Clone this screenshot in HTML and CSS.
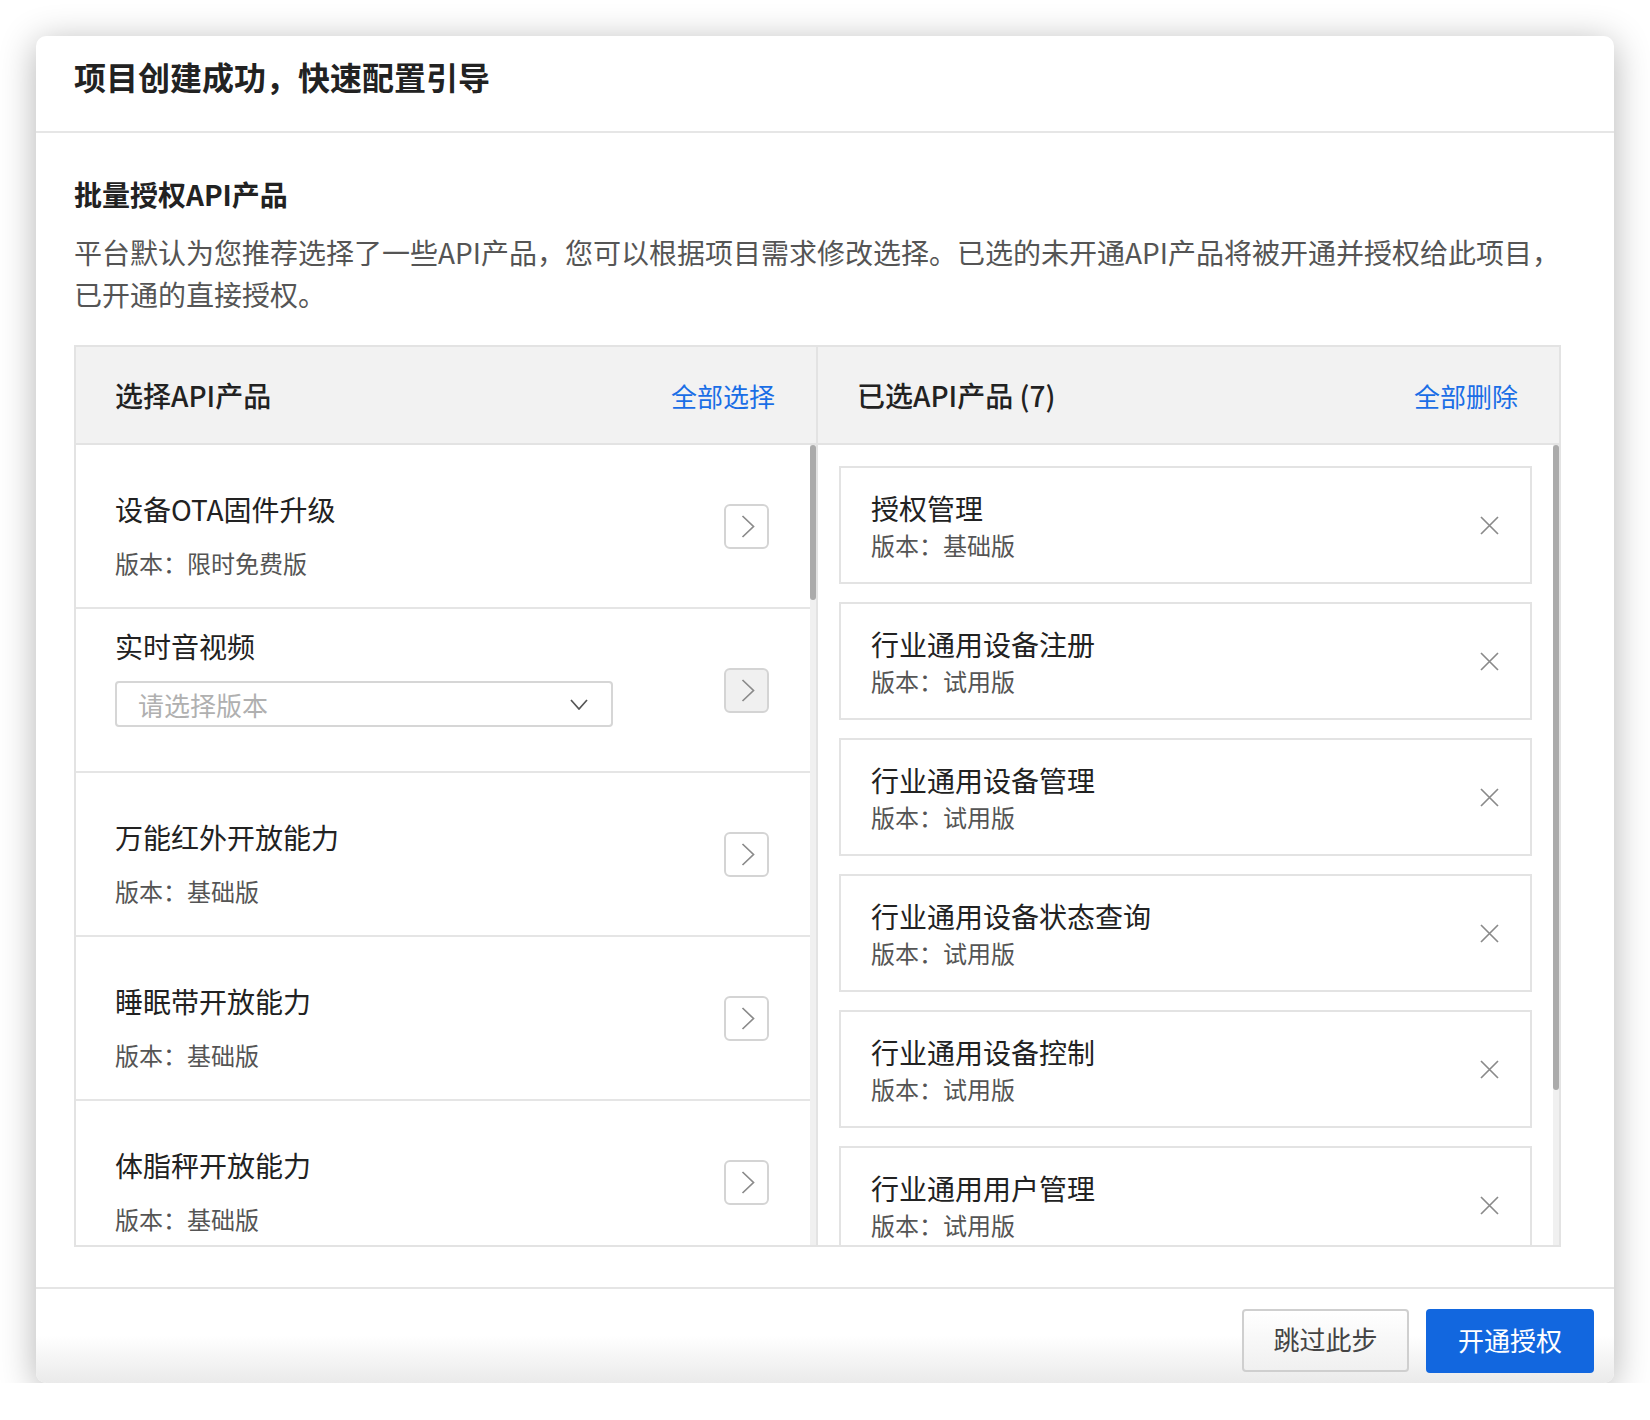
FILE: index.html
```html
<!DOCTYPE html>
<html lang="zh-CN">
<head>
<meta charset="utf-8">
<title>项目创建成功，快速配置引导</title>
<link rel="stylesheet" href="styles.css">
</head>
<body>
<div class="modal">
  <header class="modal-header">
    <h1 class="modal-title">项目创建成功，快速配置引导</h1>
  </header>

  <main class="modal-body">
    <h2 class="section-title">批量授权API产品</h2>
    <p class="section-desc">平台默认为您推荐选择了一些API产品，您可以根据项目需求修改选择。已选的未开通API产品将被开通并授权给此项目，已开通的直接授权。</p>

    <div class="transfer">
      <section class="panel panel-source">
        <div class="panel-head">
          <span class="panel-title">选择API产品</span>
          <a class="panel-action">全部选择</a>
        </div>
        <div class="panel-body">
          <ul class="source-list">
            <li class="source-item">
              <div class="item-info">
                <div class="item-name">设备OTA固件升级</div>
                <div class="item-version">版本：限时免费版</div>
              </div>
              <button class="move-btn" type="button"><svg class="chev-right" viewBox="0 0 14 23"><polyline points="1.5,1 12.5,11.5 1.5,22"/></svg></button>
            </li>
            <li class="source-item source-item-select">
              <div class="item-info">
                <div class="item-name">实时音视频</div>
                <div class="version-select">
                  <span class="placeholder">请选择版本</span>
                  <svg class="chev-down" viewBox="0 0 18 11"><polyline points="1,1 9,10 17,1"/></svg>
                </div>
              </div>
              <button class="move-btn is-disabled" type="button"><svg class="chev-right" viewBox="0 0 14 23"><polyline points="1.5,1 12.5,11.5 1.5,22"/></svg></button>
            </li>
            <li class="source-item">
              <div class="item-info">
                <div class="item-name">万能红外开放能力</div>
                <div class="item-version">版本：基础版</div>
              </div>
              <button class="move-btn" type="button"><svg class="chev-right" viewBox="0 0 14 23"><polyline points="1.5,1 12.5,11.5 1.5,22"/></svg></button>
            </li>
            <li class="source-item">
              <div class="item-info">
                <div class="item-name">睡眠带开放能力</div>
                <div class="item-version">版本：基础版</div>
              </div>
              <button class="move-btn" type="button"><svg class="chev-right" viewBox="0 0 14 23"><polyline points="1.5,1 12.5,11.5 1.5,22"/></svg></button>
            </li>
            <li class="source-item">
              <div class="item-info">
                <div class="item-name">体脂秤开放能力</div>
                <div class="item-version">版本：基础版</div>
              </div>
              <button class="move-btn" type="button"><svg class="chev-right" viewBox="0 0 14 23"><polyline points="1.5,1 12.5,11.5 1.5,22"/></svg></button>
            </li>
          </ul>
          <div class="scrollbar"><div class="thumb thumb-source"></div></div>
        </div>
      </section>

      <section class="panel panel-target">
        <div class="panel-head">
          <span class="panel-title">已选API产品 (7)</span>
          <a class="panel-action">全部删除</a>
        </div>
        <div class="panel-body">
          <ul class="target-list">
            <li class="target-card">
              <div class="item-info">
                <div class="item-name">授权管理</div>
                <div class="item-version">版本：基础版</div>
              </div>
              <svg class="remove" viewBox="0 0 19 19"><path d="M1 1L18 18M18 1L1 18"/></svg>
            </li>
            <li class="target-card">
              <div class="item-info">
                <div class="item-name">行业通用设备注册</div>
                <div class="item-version">版本：试用版</div>
              </div>
              <svg class="remove" viewBox="0 0 19 19"><path d="M1 1L18 18M18 1L1 18"/></svg>
            </li>
            <li class="target-card">
              <div class="item-info">
                <div class="item-name">行业通用设备管理</div>
                <div class="item-version">版本：试用版</div>
              </div>
              <svg class="remove" viewBox="0 0 19 19"><path d="M1 1L18 18M18 1L1 18"/></svg>
            </li>
            <li class="target-card">
              <div class="item-info">
                <div class="item-name">行业通用设备状态查询</div>
                <div class="item-version">版本：试用版</div>
              </div>
              <svg class="remove" viewBox="0 0 19 19"><path d="M1 1L18 18M18 1L1 18"/></svg>
            </li>
            <li class="target-card">
              <div class="item-info">
                <div class="item-name">行业通用设备控制</div>
                <div class="item-version">版本：试用版</div>
              </div>
              <svg class="remove" viewBox="0 0 19 19"><path d="M1 1L18 18M18 1L1 18"/></svg>
            </li>
            <li class="target-card">
              <div class="item-info">
                <div class="item-name">行业通用用户管理</div>
                <div class="item-version">版本：试用版</div>
              </div>
              <svg class="remove" viewBox="0 0 19 19"><path d="M1 1L18 18M18 1L1 18"/></svg>
            </li>
            <li class="target-card">
              <div class="item-info">
                <div class="item-name">行业通用场景联动</div>
                <div class="item-version">版本：试用版</div>
              </div>
              <svg class="remove" viewBox="0 0 19 19"><path d="M1 1L18 18M18 1L1 18"/></svg>
            </li>
          </ul>
          <div class="scrollbar"><div class="thumb thumb-target"></div></div>
        </div>
      </section>
    </div>
  </main>

  <footer class="modal-footer">
    <button class="btn btn-default" type="button">跳过此步</button>
    <button class="btn btn-primary" type="button">开通授权</button>
  </footer>
</div>
</body>
</html>
```

FILE: styles.css
```css
* {
  box-sizing: border-box;
  margin: 0;
  padding: 0;
}

html,
body {
  background: #ffffff;
}

body {
  padding-top: 36px;
  font-family: "Noto Sans CJK SC", "Noto Sans", sans-serif;
  color: #222222;
}

button {
  font: inherit;
  cursor: pointer;
}

ul {
  list-style: none;
}

.modal {
  width: 1578px;
  height: 1347px;
  margin: 0 auto;
  background: #ffffff;
  border-radius: 10px;
  box-shadow: 0 6px 36px rgba(0, 0, 0, 0.3);
  display: flex;
  flex-direction: column;
  overflow: hidden;
}

/* header */
.modal-header {
  height: 97px;
  padding: 18px 38px 0;
  border-bottom: 2px solid #e6e6e6;
}

.modal-title {
  font-size: 32px;
  line-height: 44px;
  font-weight: 700;
  color: #222222;
}

/* body */
.modal-body {
  flex: 1;
  padding: 41px 0 40px 38px;
}

.section-title {
  font-size: 28px;
  line-height: 40px;
  font-weight: 700;
  color: #222222;
}

.section-desc {
  margin-top: 17px;
  max-width: 1500px;
  font-size: 28px;
  line-height: 42px;
  color: #555555;
}

/* transfer */
.transfer {
  margin-top: 30px;
  width: 1487px;
  height: 902px;
  border: 2px solid #e3e3e3;
  display: grid;
  grid-template-columns: 742px 1fr;
}

.panel {
  display: flex;
  flex-direction: column;
  min-height: 0;
}

.panel-source {
  border-right: 2px solid #e3e3e3;
}

.panel-head {
  height: 98px;
  flex: none;
  background: #f2f2f2;
  border-bottom: 2px solid #e3e3e3;
  display: flex;
  align-items: center;
  justify-content: space-between;
  padding: 0 41px 0 39px;
}

.panel-title {
  font-size: 28px;
  font-weight: 500;
  color: #222222;
}

.panel-action {
  font-size: 26px;
  color: #1a6ee6;
}

.panel-body {
  flex: 1;
  min-height: 0;
  display: flex;
}

.scrollbar {
  width: 6px;
  flex: none;
  background: #f0f0f0;
}

.thumb {
  width: 6px;
  background: #ababab;
  border-radius: 3px;
}

.thumb-source {
  height: 155px;
}

.thumb-target {
  height: 645px;
}

/* source list */
.source-list {
  flex: 1;
  overflow: hidden;
}

.source-item {
  height: 164px;
  border-bottom: 2px solid #e5e5e5;
  display: flex;
  align-items: center;
  padding: 0 41px 0 39px;
}

.source-item .item-info {
  flex: 1;
  align-self: stretch;
  padding-top: 44px;
}

.source-item .item-version {
  margin-top: 17px;
}

.source-item-select .item-info {
  padding-top: 17px;
}

.item-name {
  font-size: 28px;
  line-height: 40px;
  color: #222222;
}

.item-version {
  font-size: 24px;
  line-height: 34px;
  color: #555555;
}

.version-select {
  margin-top: 15px;
  width: 498px;
  height: 46px;
  border: 2px solid #d6d6d6;
  border-radius: 4px;
  display: flex;
  align-items: center;
  justify-content: space-between;
  padding: 0 23px 0 21px;
}

.placeholder {
  font-size: 26px;
  color: #b0b0b0;
}

.chev-down {
  width: 18px;
  height: 11px;
  fill: none;
  stroke: #555555;
  stroke-width: 1.7;
}

.move-btn {
  width: 45px;
  height: 45px;
  flex: none;
  border: 2px solid #d4d4d4;
  border-radius: 6px;
  background: #ffffff;
  display: flex;
  align-items: center;
  justify-content: center;
}

.move-btn.is-disabled {
  background: #f0f0f0;
}

.chev-right {
  width: 14px;
  height: 23px;
  margin-left: 2px;
  fill: none;
  stroke: #8a8a8a;
  stroke-width: 1.7;
}

/* target list */
.target-list {
  flex: 1;
  overflow: hidden;
  padding: 21px 21px 0;
}

.target-card {
  height: 118px;
  margin-bottom: 18px;
  border: 2px solid #e3e3e3;
  display: flex;
  align-items: center;
  justify-content: space-between;
  padding: 0 31px 0 30px;
}

.remove {
  width: 19px;
  height: 19px;
  fill: none;
  stroke: #8a8a8a;
  stroke-width: 1.7;
}

/* footer */
.modal-footer {
  height: 96px;
  flex: none;
  border-top: 2px solid #e5e5e5;
  background: linear-gradient(to bottom, #ffffff 50%, #eaeaea 100%);
  display: flex;
  justify-content: flex-end;
  align-items: flex-start;
  gap: 17px;
  padding: 20px 20px 0;
}

.btn {
  height: 64px;
  border-radius: 4px;
  font-size: 26px;
  padding-bottom: 4px;
}

.btn-default {
  width: 167px;
  height: 63px;
  border: 2px solid #cfcfcf;
  background: linear-gradient(to bottom, #ffffff, #f0f0f0);
  color: #444444;
}

.btn-primary {
  width: 168px;
  border: none;
  background: #1267df;
  color: #ffffff;
}
```
